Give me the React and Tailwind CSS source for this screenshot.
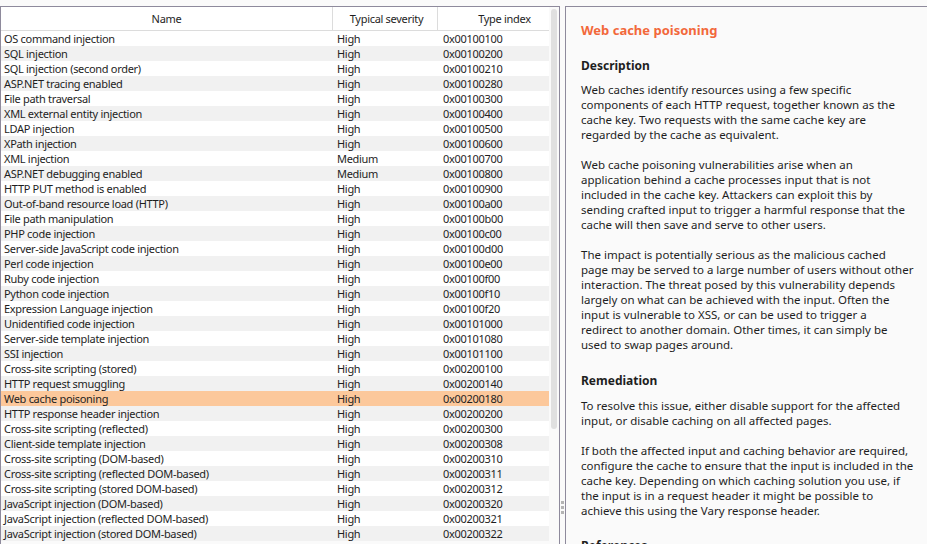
import React from 'react';

const rows = [
  ['OS command injection', 'High', '0x00100100'],
  ['SQL injection', 'High', '0x00100200'],
  ['SQL injection (second order)', 'High', '0x00100210'],
  ['ASP.NET tracing enabled', 'High', '0x00100280'],
  ['File path traversal', 'High', '0x00100300'],
  ['XML external entity injection', 'High', '0x00100400'],
  ['LDAP injection', 'High', '0x00100500'],
  ['XPath injection', 'High', '0x00100600'],
  ['XML injection', 'Medium', '0x00100700'],
  ['ASP.NET debugging enabled', 'Medium', '0x00100800'],
  ['HTTP PUT method is enabled', 'High', '0x00100900'],
  ['Out-of-band resource load (HTTP)', 'High', '0x00100a00'],
  ['File path manipulation', 'High', '0x00100b00'],
  ['PHP code injection', 'High', '0x00100c00'],
  ['Server-side JavaScript code injection', 'High', '0x00100d00'],
  ['Perl code injection', 'High', '0x00100e00'],
  ['Ruby code injection', 'High', '0x00100f00'],
  ['Python code injection', 'High', '0x00100f10'],
  ['Expression Language injection', 'High', '0x00100f20'],
  ['Unidentified code injection', 'High', '0x00101000'],
  ['Server-side template injection', 'High', '0x00101080'],
  ['SSI injection', 'High', '0x00101100'],
  ['Cross-site scripting (stored)', 'High', '0x00200100'],
  ['HTTP request smuggling', 'High', '0x00200140'],
  ['Web cache poisoning', 'High', '0x00200180'],
  ['HTTP response header injection', 'High', '0x00200200'],
  ['Cross-site scripting (reflected)', 'High', '0x00200300'],
  ['Client-side template injection', 'High', '0x00200308'],
  ['Cross-site scripting (DOM-based)', 'High', '0x00200310'],
  ['Cross-site scripting (reflected DOM-based)', 'High', '0x00200311'],
  ['Cross-site scripting (stored DOM-based)', 'High', '0x00200312'],
  ['JavaScript injection (DOM-based)', 'High', '0x00200320'],
  ['JavaScript injection (reflected DOM-based)', 'High', '0x00200321'],
  ['JavaScript injection (stored DOM-based)', 'High', '0x00200322'],
];

const selected = 24;

function Para({ lines, className = '' }) {
  return (
    <p className={`whitespace-nowrap ${className}`}>
      {lines.map((l, i) => (
        <span key={i} className="block h-[15px]">{l}</span>
      ))}
    </p>
  );
}

export default function App() {
  return (
    <div className="w-[927px] h-[544px] overflow-hidden bg-[#fafafa] flex pt-[6px] text-[#1e1e1e] font-['Noto_Sans',sans-serif]">
      {/* issue list */}
      <div className="w-[560px] shrink-0 border-l border-t border-r border-[#8e8a9c] flex">
        <div className="w-[548px] shrink-0 text-[11px] leading-[15px] tracking-[-0.3px]">
          <div className="flex h-[24px] bg-white border-b border-[#dcdcdc] items-center">
            <div className="w-[332px] h-full flex items-center justify-center border-r border-[#dcdcdc]">Name</div>
            <div className="w-[105px] h-full flex items-center justify-center border-r border-[#dcdcdc] pl-[3px]">Typical severity</div>
            <div className="w-[111px] h-full flex items-center justify-center pl-[22px]">Type index</div>
          </div>
          {rows.map(([name, sev, idx], i) => (
            <div
              key={idx}
              className={`flex h-[15px] items-center ${
                i === selected ? 'bg-[#fcc89b]' : i % 2 ? 'bg-[#f1f1f1]' : 'bg-white'
              }`}
            >
              <div className="w-[332px] pl-[3px] whitespace-nowrap">{name}</div>
              <div className="w-[105px] pl-[4px]">{sev}</div>
              <div className="w-[111px] pl-[5px]">{idx}</div>
            </div>
          ))}
        </div>
        <div className="flex-1 pt-[2px] pl-[2px]">
          <div className="w-[6px] h-[420px] rounded-full bg-[#e0e0e0]" />
        </div>
      </div>

      {/* splitter */}
      <div className="w-[5px] shrink-0 flex flex-col items-center justify-end pb-[30px] gap-[2px]">
        <span className="w-[3px] h-[3px] bg-[#b4b4b4]" />
        <span className="w-[3px] h-[3px] bg-[#b4b4b4]" />
        <span className="w-[3px] h-[3px] bg-[#b4b4b4]" />
      </div>

      {/* advisory */}
      <div className="flex-1 border-l border-t border-[#8e8a9c] pl-[15px] pt-[15px] text-[11.5px] leading-[15px]">
        <h1 className="text-[13px] leading-[16px] font-bold text-[#f2683a]">Web cache poisoning</h1>
        <h2 className="mt-[20px] font-bold text-[12px]">Description</h2>
        <Para
          className="mt-[9px]"
          lines={[
            'Web caches identify resources using a few specific',
            'components of each HTTP request, together known as the',
            'cache key. Two requests with the same cache key are',
            'regarded by the cache as equivalent.',
          ]}
        />
        <Para
          className="mt-[15px]"
          lines={[
            'Web cache poisoning vulnerabilities arise when an',
            'application behind a cache processes input that is not',
            'included in the cache key. Attackers can exploit this by',
            'sending crafted input to trigger a harmful response that the',
            'cache will then save and serve to other users.',
          ]}
        />
        <Para
          className="mt-[15px]"
          lines={[
            'The impact is potentially serious as the malicious cached',
            'page may be served to a large number of users without other',
            'interaction. The threat posed by this vulnerability depends',
            'largely on what can be achieved with the input. Often the',
            'input is vulnerable to XSS, or can be used to trigger a',
            'redirect to another domain. Other times, it can simply be',
            'used to swap pages around.',
          ]}
        />
        <h2 className="mt-[21px] font-bold text-[12px]">Remediation</h2>
        <Para
          className="mt-[10px]"
          lines={[
            'To resolve this issue, either disable support for the affected',
            'input, or disable caching on all affected pages.',
          ]}
        />
        <Para
          className="mt-[15px]"
          lines={[
            'If both the affected input and caching behavior are required,',
            'configure the cache to ensure that the input is included in the',
            'cache key. Depending on which caching solution you use, if',
            'the input is in a request header it might be possible to',
            'achieve this using the Vary response header.',
          ]}
        />
        <h2 className="mt-[20px] font-bold text-[12px]">References</h2>
      </div>
    </div>
  );
}
